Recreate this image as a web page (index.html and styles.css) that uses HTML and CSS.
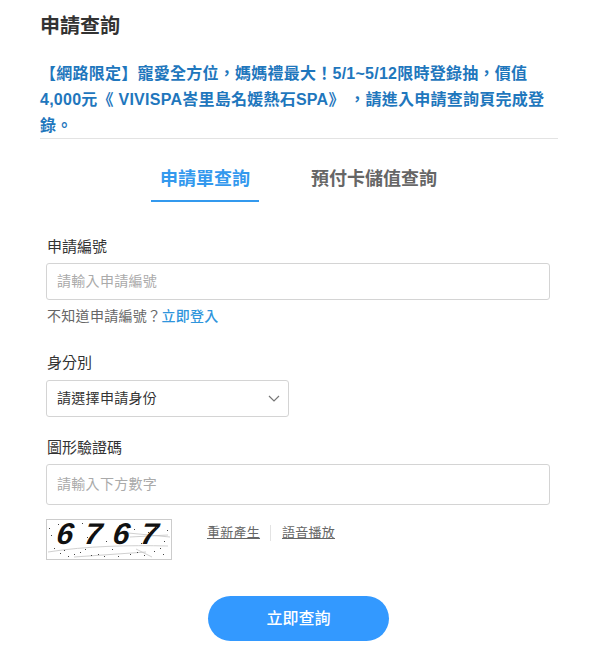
FILE: index.html
```html
<!DOCTYPE html>
<html lang="zh-Hant">
<head>
    <meta charset="UTF-8">
    <meta name="viewport" content="width=device-width, initial-scale=1.0">
    <title>申請查詢</title>
    <link rel="stylesheet" href="styles.css">
</head>
<body>
    <div class="page">
        <h1 class="page-title">申請查詢</h1>
        <p class="notice">【網路限定】寵愛全方位，媽媽禮最大！5/1~5/12限時登錄抽，價值4,000元《 VIVISPA峇里島名媛熱石SPA》&nbsp;，請進入申請查詢頁完成登錄。</p>

        <div class="tabs">
            <a class="tab tab-active" href="#">申請單查詢</a>
            <a class="tab" href="#">預付卡儲值查詢</a>
        </div>

        <form class="query-form">
            <div class="field field-number">
                <label class="field-label" for="applyNo">申請編號</label>
                <input class="text-input" id="applyNo" type="text" placeholder="請輸入申請編號">
                <div class="help-text">不知道申請編號？<a href="#">立即登入</a></div>
            </div>

            <div class="field field-identity">
                <label class="field-label" for="identity">身分別</label>
                <div class="select-wrap">
                    <select class="select-input" id="identity">
                        <option>請選擇申請身份</option>
                    </select>
                    <svg class="select-arrow" width="12" height="7" viewBox="0 0 12 7" fill="none">
                        <path d="M1 1l5 5 5-5" stroke="#777" stroke-width="1.2"/>
                    </svg>
                </div>
            </div>

            <div class="field field-captcha">
                <label class="field-label" for="captcha">圖形驗證碼</label>
                <input class="text-input text-input-tall" id="captcha" type="text" placeholder="請輸入下方數字">
                <div class="captcha-row">
                    <svg class="captcha-img" width="126" height="41" viewBox="0 0 126 41">
                        <rect x="0.5" y="0.5" width="125" height="40" fill="#fff" stroke="#999" stroke-dasharray="1 1"/>
                        <g stroke="#c4c4c4" stroke-width="0.8" fill="none">
                            <path d="M2 33C40 27 84 26 122 27"/>
                            <path d="M82 14L124 18"/>
                            <path d="M84 18L122 16"/>
                            <path d="M28 38L100 33"/>
                            <path d="M90 30L106 38"/>
                        </g>
                        <text class="captcha-text" x="13" y="25" transform="skewX(-8)">6767</text>
                        <g fill="#444">
                            <rect x="5" y="16" width="1" height="1"/><rect x="12" y="5" width="1" height="1"/>
                            <rect x="36" y="4" width="1" height="1"/><rect x="41" y="18" width="1" height="1"/>
                            <rect x="55" y="9" width="1" height="1"/><rect x="60" y="22" width="1" height="1"/>
                            <rect x="73" y="6" width="1" height="1"/><rect x="88" y="10" width="1" height="1"/>
                            <rect x="95" y="24" width="1" height="1"/><rect x="110" y="8" width="1" height="1"/>
                            <rect x="118" y="22" width="1" height="1"/><rect x="14" y="34" width="1" height="1"/>
                            <rect x="22" y="37" width="1" height="1"/><rect x="34" y="33" width="1" height="1"/>
                            <rect x="45" y="36" width="1" height="1"/><rect x="52" y="35" width="1" height="1"/>
                            <rect x="66" y="30" width="1" height="1"/><rect x="72" y="37" width="1" height="1"/>
                            <rect x="84" y="35" width="1" height="1"/><rect x="98" y="36" width="1" height="1"/>
                            <rect x="108" y="32" width="1" height="1"/><rect x="117" y="35" width="1" height="1"/>
                            <rect x="8" y="29" width="1" height="1"/><rect x="18" y="31" width="1" height="1"/>
                            <rect x="28" y="35" width="1" height="1"/><rect x="39" y="30" width="1" height="1"/>
                            <rect x="48" y="12" width="1" height="1"/><rect x="78" y="15" width="1" height="1"/>
                            <rect x="102" y="13" width="1" height="1"/><rect x="114" y="29" width="1" height="1"/>
                            <rect x="3" y="9" width="1" height="1"/><rect x="121" y="11" width="1" height="1"/>
                            <rect x="58" y="37" width="1" height="1"/><rect x="91" y="33" width="1" height="1"/>
                        </g>
                    </svg>
                    <div class="captcha-links">
                        <a href="#">重新產生</a>
                        <span class="link-divider"></span>
                        <a href="#">語音播放</a>
                    </div>
                </div>
            </div>

            <div class="submit-row">
                <button class="submit-btn" type="button">立即查詢</button>
            </div>
        </form>
    </div>
</body>
</html>
```

FILE: styles.css
```css
body {
    margin: 0;
    background-color: #fff;
    color: #333;
    font-family: "Liberation Sans", "Noto Sans CJK TC", sans-serif;
}

.page {
    box-sizing: border-box;
    width: 602px;
    height: 656px;
    padding: 12px 44px 0 40px;
    overflow: hidden;
}

.page-title {
    margin: 0;
    font-size: 20px;
    line-height: 28px;
    font-weight: bold;
    color: #333;
}

.notice {
    margin: 21px 0 0;
    height: 78px;
    width: 518px;
    box-sizing: border-box;
    padding-right: 8px;
    border-bottom: 1px solid #e3e3e3;
    font-size: 16px;
    line-height: 26px;
    font-weight: bold;
    letter-spacing: 0.25px;
    color: #1f77bd;
}

.tabs {
    display: flex;
    justify-content: flex-start;
    gap: 43px;
    margin-top: 27px;
    padding-left: 111px;
}

.tab {
    padding: 0 9px 8px;
    font-size: 18px;
    line-height: 26px;
    font-weight: bold;
    color: #666;
    text-decoration: none;
    border-bottom: 2px solid transparent;
}

.tab-active {
    color: #3399ee;
    border-bottom-color: #3399ee;
}

.query-form {
    width: 504px;
    margin: 0 0 0 6px;
}

.field-label {
    display: block;
    margin-bottom: 6px;
    padding-left: 1px;
    font-size: 15px;
    line-height: 20px;
    color: #333;
}

.field-number {
    margin-top: 35px;
}

.field-identity {
    margin-top: 27px;
}

.field-identity .field-label {
    margin-bottom: 7px;
}

.field-captcha {
    margin-top: 21px;
}

.text-input,
.select-input {
    display: block;
    box-sizing: border-box;
    width: 100%;
    height: 37px;
    padding: 0 10px 2px;
    border: 1px solid #d4d4d4;
    border-radius: 3px;
    background-color: #fff;
    font-family: inherit;
    font-size: 14px;
    letter-spacing: 0.3px;
    color: #333;
}

.text-input::placeholder {
    color: #aaa;
    opacity: 1;
}

.text-input-tall {
    height: 41px;
}

.help-text {
    margin-top: 6px;
    padding-left: 1px;
    font-size: 14px;
    line-height: 20px;
    letter-spacing: 0.3px;
    color: #666;
}

.help-text a {
    color: #2f95dc;
    text-decoration: none;
    font-weight: 500;
}

.select-wrap {
    position: relative;
    width: 243px;
}

.select-input {
    appearance: none;
    -webkit-appearance: none;
}

.select-arrow {
    position: absolute;
    top: 15px;
    right: 9px;
    pointer-events: none;
}

.captcha-row {
    display: flex;
    align-items: flex-start;
    margin-top: 14px;
}

.captcha-img {
    display: block;
    flex-shrink: 0;
    overflow: visible;
}

.captcha-text {
    font-family: "Liberation Sans", sans-serif;
    font-size: 30px;
    font-weight: bold;
    font-style: italic;
    letter-spacing: 11.5px;
    fill: #111;
}

.captcha-links {
    display: flex;
    align-items: center;
    margin: 4px 0 0 35px;
    font-size: 13px;
    line-height: 20px;
    letter-spacing: 0.25px;
}

.captcha-links a {
    color: #666;
}

.link-divider {
    width: 1px;
    height: 16px;
    margin: 0 11px 0 10px;
    background-color: #e3e3e3;
}

.submit-row {
    display: flex;
    margin-top: 36px;
    padding-left: 162px;
}

.submit-btn {
    width: 181px;
    height: 45px;
    padding: 0 0 3px;
    border: 0;
    border-radius: 23px;
    background-color: #3399ff;
    color: #fff;
    font-family: inherit;
    font-size: 16px;
    font-weight: 500;
}
```
